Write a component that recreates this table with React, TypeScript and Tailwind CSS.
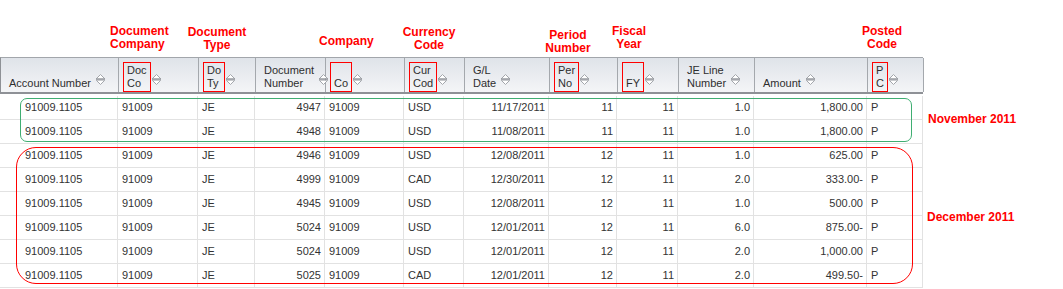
import React from 'react';

type Col = {
  label: string[];
  align: 'left' | 'right';
  boxed?: boolean;
  pad?: string;
};

// column widths add up to 923px
const gridCols =
  'grid grid-cols-[118px_80px_57px_70px_79px_60px_85px_68px_61px_76px_113px_56px]';

const columns: Col[] = [
  { label: ['Account Number'], align: 'left', pad: 'pl-[25px]' },
  { label: ['Doc', 'Co'], align: 'left', boxed: true },
  { label: ['Do', 'Ty'], align: 'left', boxed: true },
  { label: ['Document', 'Number'], align: 'right' },
  { label: ['Co'], align: 'left', boxed: true },
  { label: ['Cur', 'Cod'], align: 'left', boxed: true },
  { label: ['G/L', 'Date'], align: 'right' },
  { label: ['Per', 'No'], align: 'right', boxed: true },
  { label: ['FY'], align: 'right', boxed: true },
  { label: ['JE Line', 'Number'], align: 'right' },
  { label: ['Amount'], align: 'right' },
  { label: ['P', 'C'], align: 'left', boxed: true },
];

const rows: string[][] = [
  ['91009.1105', '91009', 'JE', '4947', '91009', 'USD', '11/17/2011', '11', '11', '1.0', '1,800.00', 'P'],
  ['91009.1105', '91009', 'JE', '4948', '91009', 'USD', '11/08/2011', '11', '11', '1.0', '1,800.00', 'P'],
  ['91009.1105', '91009', 'JE', '4946', '91009', 'USD', '12/08/2011', '12', '11', '1.0', '625.00', 'P'],
  ['91009.1105', '91009', 'JE', '4999', '91009', 'CAD', '12/30/2011', '12', '11', '2.0', '333.00-', 'P'],
  ['91009.1105', '91009', 'JE', '4945', '91009', 'USD', '12/08/2011', '12', '11', '1.0', '500.00', 'P'],
  ['91009.1105', '91009', 'JE', '5024', '91009', 'USD', '12/01/2011', '12', '11', '6.0', '875.00-', 'P'],
  ['91009.1105', '91009', 'JE', '5024', '91009', 'USD', '12/01/2011', '12', '11', '2.0', '1,000.00', 'P'],
  ['91009.1105', '91009', 'JE', '5025', '91009', 'CAD', '12/01/2011', '12', '11', '2.0', '499.50-', 'P'],
];

// red callouts above the header: [lines, left, top, centered]
const notes: { lines: string[]; left: number; top: number; center?: boolean }[] = [
  { lines: ['Document', 'Company'], left: 110, top: 25 },
  { lines: ['Document', 'Type'], left: 217, top: 26, center: true },
  { lines: ['Company'], left: 319, top: 35 },
  { lines: ['Currency', 'Code'], left: 429, top: 26, center: true },
  { lines: ['Period', 'Number'], left: 568, top: 29, center: true },
  { lines: ['Fiscal', 'Year'], left: 629, top: 25, center: true },
  { lines: ['Posted', 'Code'], left: 882, top: 25, center: true },
];

function SortIcon() {
  return (
    <svg width="9" height="11" viewBox="0 0 9 11" className="shrink-0 mb-[7px] ml-[1px]">
      <path d="M0.5 4.5 L4.5 0.5 L8.5 4.5" fill="#fff" stroke="#a3a6ab" strokeWidth="1" />
      <path d="M0.5 6.5 L4.5 10.5 L8.5 6.5" fill="#fff" stroke="#a3a6ab" strokeWidth="1" />
      <line x1="0" y1="5" x2="9" y2="5" stroke="#6f7378" strokeWidth="1" />
      <line x1="0" y1="6" x2="9" y2="6" stroke="#9a9da2" strokeWidth="1" />
    </svg>
  );
}

export default function App() {
  return (
    <div
      className="relative w-[1063px] h-[289px] bg-white overflow-hidden text-[#333]"
      style={{ fontFamily: '"Liberation Sans", Arial, sans-serif' }}
    >
      {/* callouts */}
      <div className="relative h-[57px]">
        {notes.map((n) => (
          <div
            key={n.lines.join(' ')}
            className={`absolute flex flex-col text-[12px] leading-[13px] font-bold text-[#ff0000] whitespace-nowrap ${
              n.center ? 'items-center -translate-x-1/2' : 'items-start'
            }`}
            style={{ left: n.left, top: n.top }}
          >
            {n.lines.map((l) => (
              <span key={l}>{l}</span>
            ))}
          </div>
        ))}
      </div>

      <div className="flex">
        <div className="w-[923px] text-[11px]">
          {/* header */}
          <div
            className={`${gridCols} h-[37px] border-t border-t-[#a2a6ab] border-b-2 border-b-[#8e9196] border-l border-l-[#8e9196] bg-gradient-to-b from-[#dfe3e9] to-[#f4f5f7]`}
          >
            {columns.map((c, i) => (
              <div key={i} className="flex items-end pl-[4px] border-r border-r-[#a4a8ad] text-[#2e2e2e]">
                <div
                  className={`flex flex-col justify-end leading-[13px] px-[3px] pb-[1px] border whitespace-nowrap ${
                    c.boxed ? 'border-[#ff0000] h-[30px]' : 'border-transparent'
                  }`}
                >
                  {c.label.map((l) => (
                    <span key={l}>{l}</span>
                  ))}
                </div>
                <SortIcon />
              </div>
            ))}
          </div>

          {/* body */}
          <div className="relative pt-[2px]">
            {rows.map((r, ri) => (
              <div key={ri} className={`${gridCols} h-6 border-b border-b-[#e2e2e2]`}>
                {r.map((v, ci) => {
                  const c = columns[ci];
                  return (
                    <div
                      key={ci}
                      className={`flex items-center border-r border-r-[#e2e2e2] whitespace-nowrap ${
                        c.align === 'right' ? 'justify-end pr-[3px]' : `justify-start ${c.pad ?? 'pl-[4px]'}`
                      }`}
                    >
                      {v}
                    </div>
                  );
                })}
              </div>
            ))}

            {/* group outlines */}
            <div className="absolute left-[20px] top-[4px] w-[892px] h-[44px] border border-[#3fae72] rounded-[7px]" />
            <div className="absolute left-[16px] top-[53px] w-[897px] h-[137px] border border-[#ff0000] rounded-[20px]" />
          </div>
        </div>

        <div className="relative flex-1 text-[12px] leading-[13px] font-bold text-[#ff0000] whitespace-nowrap">
          <span className="absolute left-[5px] top-[56px]">November 2011</span>
          <span className="absolute left-[4px] top-[154px]">December 2011</span>
        </div>
      </div>
    </div>
  );
}
